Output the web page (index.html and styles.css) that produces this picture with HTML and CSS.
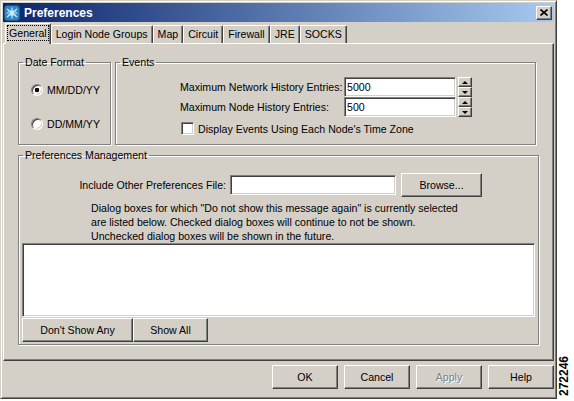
FILE: index.html
```html
<!DOCTYPE html>
<html lang="en">
<head>
    <meta charset="UTF-8">
    <title>Preferences</title>
    <link rel="stylesheet" href="styles.css">
</head>
<body>
<div class="page">
    <div class="dialog">
        <div class="titlebar">
            <svg class="app-icon" width="16" height="16" viewBox="0 0 16 16">
                <rect x="0.5" y="0.5" width="15" height="15" rx="3" fill="#2f86bf" stroke="#1d5a86"/>
                <path d="M3 4 L13 12 M3 12 L13 4 M8 2.5 V13.5 M2.5 8 H13.5 M4 6 H12 M4 10 H12" stroke="#c4ecff" stroke-width="1.2" fill="none"/>
            </svg>
            <span class="title">Preferences</span>
            <button class="close-btn">
                <svg width="8" height="7" viewBox="0 0 8 7">
                    <path d="M0.5 0.5 L7.5 6.5 M7.5 0.5 L0.5 6.5" stroke="#000" stroke-width="1.6"/>
                </svg>
            </button>
        </div>

        <div class="tabs">
            <div class="tab active"><span class="focus">General</span></div>
            <div class="tab">Login Node Groups</div>
            <div class="tab">Map</div>
            <div class="tab">Circuit</div>
            <div class="tab">Firewall</div>
            <div class="tab">JRE</div>
            <div class="tab">SOCKS</div>
        </div>

        <div class="panel">
            <div class="top-row">
                <fieldset class="group date-group">
                    <legend>Date Format</legend>
                    <div class="date-body">
                        <label class="radio-row"><span class="radio checked"></span>MM/DD/YY</label>
                        <label class="radio-row second"><span class="radio"></span>DD/MM/YY</label>
                    </div>
                </fieldset>

                <fieldset class="group events-group">
                    <legend>Events</legend>
                    <div class="events-body">
                        <div class="history-grid">
                            <span>Maximum Network History Entries:</span>
                            <div class="field">5000</div>
                            <div class="spinner"><span class="spin"><i class="arrow-up"></i></span><span class="spin"><i class="arrow-down"></i></span></div>

                            <span>Maximum Node History Entries:</span>
                            <div class="field">500</div>
                            <div class="spinner"><span class="spin"><i class="arrow-up"></i></span><span class="spin"><i class="arrow-down"></i></span></div>
                        </div>
                        <label class="check-row"><span class="checkbox"></span>Display Events Using Each Node's Time Zone</label>
                    </div>
                </fieldset>
            </div>

            <fieldset class="group mgmt-group">
                <legend>Preferences Management</legend>
                <div class="mgmt-body">
                    <div class="file-row">
                        <span class="file-label">Include Other Preferences File:</span>
                        <div class="field file-field"></div>
                        <button class="btn browse-btn">Browse...</button>
                    </div>
                    <p class="note">Dialog boxes for which "Do not show this message again" is currently selected<br>are listed below. Checked dialog boxes will continue to not be shown.<br>Unchecked dialog boxes will be shown in the future.</p>
                    <div class="list-box"></div>
                    <div class="list-actions">
                        <button class="btn wide-btn">Don't Show Any</button>
                        <button class="btn show-btn">Show All</button>
                    </div>
                </div>
            </fieldset>
        </div>

        <div class="footer">
            <button class="btn foot-btn">OK</button>
            <button class="btn foot-btn">Cancel</button>
            <button class="btn foot-btn disabled">Apply</button>
            <button class="btn foot-btn">Help</button>
        </div>
    </div>

    <div class="fig-num">272246</div>
</div>
</body>
</html>
```

FILE: styles.css
```css
/* Base */
* {
    box-sizing: border-box;
    margin: 0;
    padding: 0;
}
body {
    background-color: #ffffff;
    font-family: "Liberation Sans", Arial, sans-serif;
    font-size: 10.6px;
    color: #000;
}
.page {
    display: flex;
    width: 574px;
    height: 401px;
}

/* Dialog frame */
.dialog {
    width: 557px;
    height: 399px;
    padding: 2px;
    background-color: #d4d0c8;
    border: 1px solid;
    border-color: #d4d0c8 #404040 #404040 #d4d0c8;
    box-shadow: inset 1px 1px #ffffff, inset -1px -1px #808080;
    display: flex;
    flex-direction: column;
}

/* Title bar */
.titlebar {
    height: 19px;
    display: flex;
    align-items: center;
    padding: 0 2px 0 1px;
    background: linear-gradient(to right, #0a246a, #a6caf0);
}
.app-icon {
    flex: none;
}
.title {
    margin-left: 4px;
    color: #ffffff;
    font-weight: bold;
    font-size: 12px;
}
.close-btn {
    margin-left: auto;
    width: 16px;
    height: 14px;
    display: flex;
    align-items: center;
    justify-content: center;
    background-color: #d4d0c8;
    border: 1px solid;
    border-color: #ffffff #404040 #404040 #ffffff;
    box-shadow: inset -1px -1px #808080;
}

/* Tabs */
.tabs {
    margin-top: 1px;
    margin-bottom: -1px;
    height: 21px;
    display: flex;
    align-items: flex-start;
    padding-left: 2px;
    white-space: nowrap;
}
.tab {
    margin-top: 2px;
    height: 18px;
    padding: 0 4px;
    line-height: 16px;
    border-top: 1px solid #ffffff;
    border-left: 1px solid #ffffff;
    border-right: 1px solid #404040;
    box-shadow: inset -1px 0 #808080;
    border-radius: 2px 2px 0 0;
}
.tab.active {
    margin-top: 0;
    height: 21px;
    padding: 0 2px;
    line-height: 18px;
    background-color: #d4d0c8;
    z-index: 1;
}
.focus {
    display: inline-block;
    padding: 0 1px;
    line-height: 14px;
    outline: 1px dotted #000;
}

/* Tab panel */
.panel {
    height: 318px;
    flex: none;
    padding: 12px 14px 0 14px;
    border: 1px solid;
    border-color: #ffffff #404040 #404040 #ffffff;
    box-shadow: inset -1px -1px #808080;
}
.top-row {
    display: flex;
    gap: 4px;
}

/* Group boxes */
.group {
    padding: 0;
    border: 1px solid #808080;
    box-shadow: inset 1px 1px #ffffff, 1px 1px #ffffff;
}
.group legend {
    margin-left: 4px;
    padding: 0 2px;
    line-height: 13px;
}
.date-group {
    width: 93px;
}
.date-body {
    padding: 14px 0 0 12px;
}
.radio-row {
    display: flex;
    align-items: center;
    gap: 4px;
    height: 14px;
}
.radio-row.second {
    margin-top: 20px;
}
.radio {
    width: 12px;
    height: 12px;
    border-radius: 50%;
    background-color: #ffffff;
    border: 1px solid;
    border-color: #808080 #ffffff #ffffff #808080;
    box-shadow: inset 1px 1px #404040, inset -1px -1px #d4d0c8;
}
.radio.checked {
    background: radial-gradient(circle, #000 2px, #ffffff 2.6px);
}

.events-group {
    width: 421px;
}
.events-body {
    padding: 8px 0 9px 64px;
}
.history-grid {
    display: grid;
    grid-template-columns: 164px 112px 14px;
    grid-auto-rows: 20px;
    align-items: center;
    white-space: nowrap;
}
.history-grid .spinner {
    margin-left: 2px;
}
.field {
    height: 20px;
    padding: 0 2px;
    line-height: 18px;
    background-color: #ffffff;
    border: 1px solid;
    border-color: #808080 #ffffff #ffffff #808080;
    box-shadow: inset 1px 1px #404040, inset -1px -1px #d4d0c8;
}
.spinner {
    width: 14px;
    height: 20px;
    display: flex;
    flex-direction: column;
}
.spin {
    height: 10px;
    display: flex;
    align-items: center;
    justify-content: center;
    background-color: #d4d0c8;
    border: 1px solid;
    border-color: #ffffff #404040 #404040 #ffffff;
    box-shadow: inset -1px -1px #808080;
}
.arrow-up {
    border-left: 3px solid transparent;
    border-right: 3px solid transparent;
    border-bottom: 3px solid #000;
}
.arrow-down {
    border-left: 3px solid transparent;
    border-right: 3px solid transparent;
    border-top: 3px solid #000;
}
.check-row {
    margin: 5px 0 0 1px;
    display: flex;
    align-items: center;
    gap: 4px;
    height: 13px;
}
.checkbox {
    width: 13px;
    height: 13px;
    background-color: #ffffff;
    border: 1px solid;
    border-color: #808080 #ffffff #ffffff #808080;
    box-shadow: inset 1px 1px #404040, inset -1px -1px #d4d0c8;
}

/* Preferences management */
.mgmt-group {
    margin-top: 4px;
}
.mgmt-body {
    padding-bottom: 2px;
}
.file-row {
    margin-top: 11px;
    height: 23px;
    display: flex;
    align-items: center;
}
.file-label {
    width: 207px;
    text-align: right;
}
.file-field {
    margin-left: 4px;
    width: 166px;
}
.browse-btn {
    margin-left: 5px;
    width: 81px;
    height: 23px;
}
.note {
    margin: 5px 0 0 72px;
    line-height: 14px;
}
.list-box {
    margin: 0 3px;
    height: 74px;
    background-color: #ffffff;
    border: 1px solid;
    border-color: #808080 #ffffff #ffffff #808080;
    box-shadow: inset 1px 1px #404040, inset -1px -1px #d4d0c8;
}
.list-actions {
    margin: 1px 3px 0;
    display: flex;
}
.wide-btn {
    width: 111px;
}
.show-btn {
    width: 75px;
}

/* Buttons */
.btn {
    height: 24px;
    background-color: #d4d0c8;
    border: 1px solid;
    border-color: #ffffff #404040 #404040 #ffffff;
    box-shadow: inset -1px -1px #808080;
    font-family: inherit;
    font-size: 10.6px;
    color: #000;
}
.btn.disabled {
    color: #808080;
    text-shadow: 1px 1px #ffffff;
}

/* Footer */
.footer {
    margin-top: 4px;
    display: flex;
    justify-content: flex-end;
    gap: 6px;
}
.foot-btn {
    width: 66px;
}

/* Figure number */
.fig-num {
    align-self: flex-end;
    margin-bottom: 5px;
    writing-mode: vertical-rl;
    transform: rotate(180deg);
    font-size: 12px;
    font-weight: bold;
    line-height: 14px;
}
```
